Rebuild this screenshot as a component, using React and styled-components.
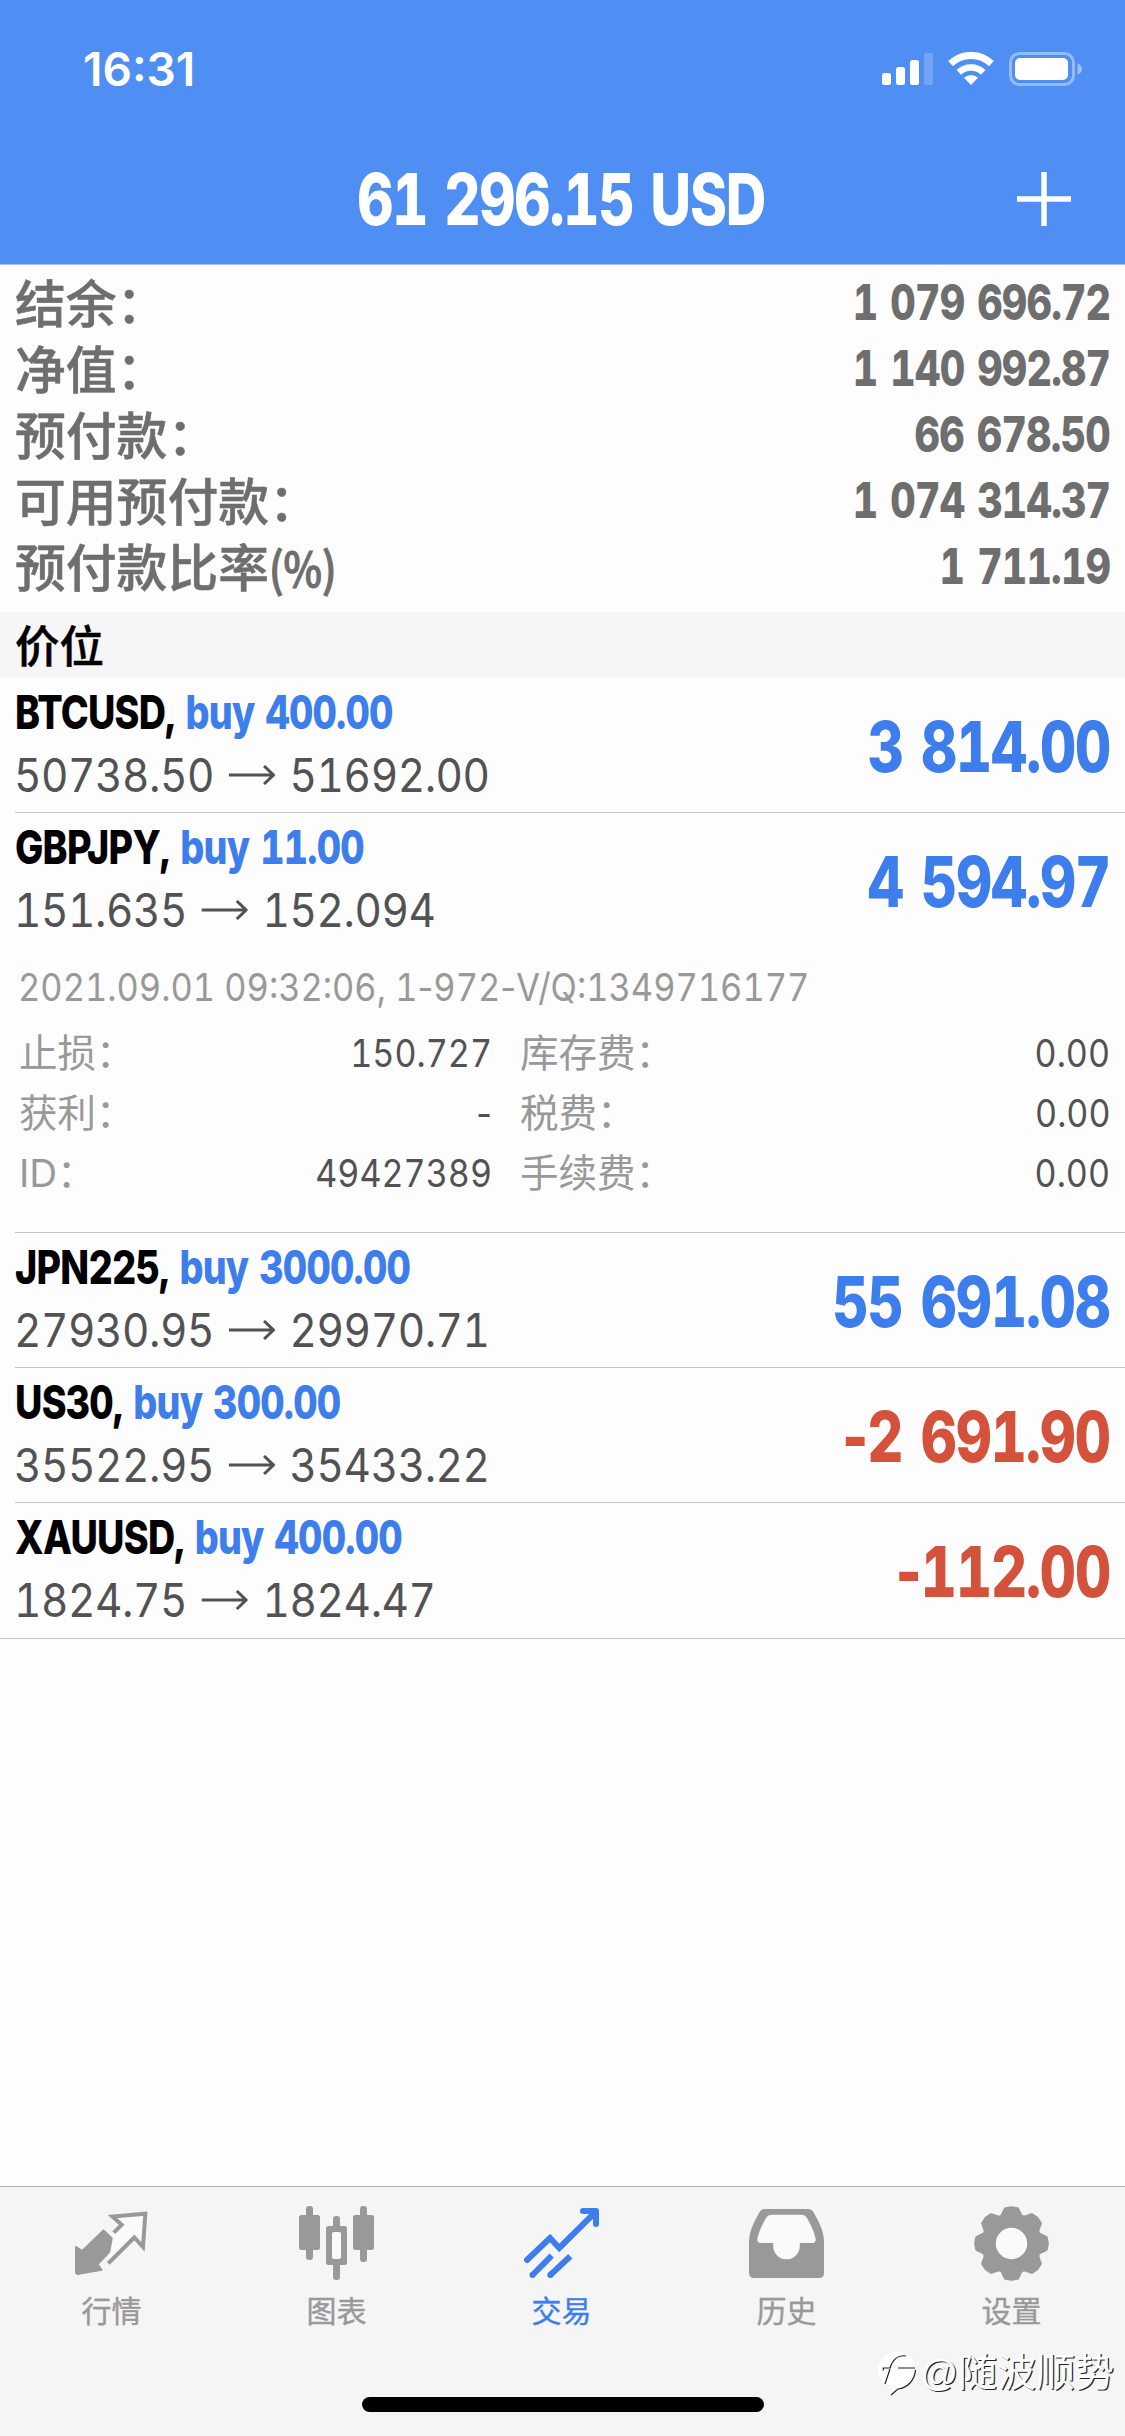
import React from 'react';
import styled, { createGlobalStyle, css } from 'styled-components';

const color = {
  header: '#4f8ff4',
  blue: '#3e7eec',
  red: '#d4513c',
  gray: '#6e6e6e',
  price: '#525254',
  label: '#999999',
  line: '#c4c4c6',
};

const latin = `Inter, "Noto Sans CJK SC", sans-serif`;

const summary = [
  { label: '结余：', value: '1 079 696.72' },
  { label: '净值：', value: '1 140 992.87' },
  { label: '预付款：', value: '66 678.50' },
  { label: '可用预付款：', value: '1 074 314.37' },
  { label: '预付款比率', unit: '(%)', value: '1 711.19' },
];

const positions = [
  { symbol: 'BTCUSD', side: 'buy 400.00', open: '50738.50', now: '51692.00', profit: '3 814.00' },
  {
    symbol: 'GBPJPY',
    side: 'buy 11.00',
    open: '151.635',
    now: '152.094',
    profit: '4 594.97',
    detail: {
      comment: '2021.09.01 09:32:06, 1-972-V/Q:1349716177',
      rows: [
        ['止损：', '150.727', '库存费：', '0.00'],
        ['获利：', '-', '税费：', '0.00'],
        ['ID：', '49427389', '手续费：', '0.00'],
      ],
    },
  },
  { symbol: 'JPN225', side: 'buy 3000.00', open: '27930.95', now: '29970.71', profit: '55 691.08' },
  { symbol: 'US30', side: 'buy 300.00', open: '35522.95', now: '35433.22', profit: '-2 691.90' },
  { symbol: 'XAUUSD', side: 'buy 400.00', open: '1824.75', now: '1824.47', profit: '-112.00' },
];

function SignalIcon() {
  return (
    <svg width="51" height="34" viewBox="0 0 51 34" fill="#fff">
      <rect x="0" y="21" width="9" height="12" rx="2.5" />
      <rect x="14" y="15" width="9" height="18" rx="2.5" />
      <rect x="28" y="8" width="9" height="25" rx="2.5" />
      <rect x="42" y="1" width="9" height="32" rx="2.5" opacity="0.2" />
    </svg>
  );
}

function WifiIcon() {
  return (
    <svg width="46" height="34" viewBox="0 0 46 34" fill="none" stroke="#fff">
      <path d="M2.6 11.6A29.5 29.5 0 0 1 43.4 11.6" strokeWidth="7" />
      <path d="M10.8 20.4A17.7 17.7 0 0 1 35.2 20.4" strokeWidth="6.6" />
      <path d="M23 33L16 25.8A10 10 0 0 1 30 25.8Z" fill="#fff" stroke="none" />
    </svg>
  );
}

function BatteryIcon() {
  return (
    <svg width="74" height="34" viewBox="0 0 74 34">
      <rect x="1.5" y="1.5" width="63" height="31" rx="9" fill="none" stroke="#fff" strokeOpacity="0.4" strokeWidth="3" />
      <rect x="6" y="6" width="53" height="22" rx="5" fill="#fff" />
      <path d="M68.500 11.500C71.500 12.500 73 14.500 73 17S71.500 21.500 68.500 22.500Z" fill="#fff" opacity="0.45" />
    </svg>
  );
}

function QuotesIcon() {
  return (
    <svg width="75" height="75" viewBox="0 0 75 75">
      <path
        d="M2 41L8.300 45L29.500 24.500L43.200 37.500L23.500 58.300L27.500 63.800L3.500 68L2 66.500Z"
        fill="currentColor" stroke="currentColor" strokeWidth="2" strokeLinejoin="round"
      />
      <path
        d="M39.700 26.700L47.700 18.800L38.500 10.500L71.300 7.800L69 41L60.300 31.500L34.300 57.300"
        fill="#fafafa" stroke="none"
      />
      <path
        d="M39.700 26.700L47.700 18.800L38.500 10.500L71.300 7.800L69 41L60.300 31.500L34.300 57.300"
        fill="none" stroke="currentColor" strokeWidth="4"
      />
    </svg>
  );
}

function ChartIcon() {
  return (
    <svg width="75" height="75" viewBox="0 0 75 75" fill="currentColor">
      <rect x="7" y="0" width="7" height="54" rx="3" />
      <rect x="0" y="9" width="21" height="35" rx="2.500" />
      <rect x="34" y="10" width="7" height="64" rx="3" />
      <rect x="27" y="20" width="21" height="39" rx="2.500" />
      <rect x="33" y="26" width="9" height="27" rx="2" fill="#fafafa" />
      <rect x="61" y="0" width="7" height="56" rx="3" />
      <rect x="54" y="9" width="21" height="35" rx="2.500" />
    </svg>
  );
}

function TradeIcon() {
  return (
    <svg width="75" height="75" viewBox="0 0 75 75" fill="none" stroke="currentColor" strokeWidth="6">
      <path d="M3 54L26 32L35.300 42L71 6.500" strokeLinecap="round" />
      <path d="M59 5H72V18" strokeLinecap="round" strokeLinejoin="round" />
      <path d="M27.700 49.700L8.500 69M46.300 50.300L26.300 69" />
      <g fill="currentColor" stroke="none">
        <circle cx="8.500" cy="69" r="3" />
        <circle cx="26.300" cy="69" r="3" />
      </g>
    </svg>
  );
}

function HistoryIcon() {
  return (
    <svg width="75" height="75" viewBox="0 0 75 75" fill="currentColor">
      <path
        fill="#fafafa"
        d="M20 7H55L68 36H51V40A13 13 0 0 1 24 40V36H7Z"
      />
      <path
        fillRule="evenodd"
        d="M16 3H59Q63 3 65 7Q75 24 75 35V67Q75 72 70 72H5Q0 72 0 67V35Q0 24 10 7Q12 3 16 3Z
        M23 8.700Q19 8.700 17 12Q10 24 8.300 33Q8 37 11.500 37H24.200V40A13.200 13.200 0 0 0 50.800 40V37H63.500Q67 37 66.700 33Q65 24 58 12Q56 8.700 52 8.700Z"
      />
    </svg>
  );
}

function gearPath() {
  const points = [];
  const at = (r, deg) => {
    const a = (deg * Math.PI) / 180;
    points.push(`${(37.5 + r * Math.sin(a)).toFixed(2)} ${(37.5 - r * Math.cos(a)).toFixed(2)}`);
  };
  for (let i = 0; i < 8; i++) {
    at(28.6, i * 45 - 19);
    at(34.8, i * 45 - 9.5);
    at(35.4, i * 45);
    at(34.8, i * 45 + 9.5);
    at(28.6, i * 45 + 19);
  }
  return `M${points.join('L')}Z`;
}

function SettingsIcon() {
  return (
    <svg width="75" height="75" viewBox="0 0 75 75">
      <path d={gearPath()} fill="currentColor" stroke="currentColor" strokeWidth="4" strokeLinejoin="round" />
      <circle cx="37.500" cy="37.500" r="15.700" fill="#fafafa" />
    </svg>
  );
}

function ArrowIcon() {
  return (
    <svg width="51" height="20" viewBox="0 0 46 20" preserveAspectRatio="none" fill="none" stroke="currentColor" strokeWidth="3">
      <path d="M0 10H44M35 1L44.300 10L35 19" />
    </svg>
  );
}

function WatermarkLogo() {
  return (
    <svg width="38" height="44" viewBox="0 0 38 44">
      <path d="M19 0C8 0 0 8 0 18C0 26 5 31 14 34L12 43C28 38 38 29 38 17C38 7 30 0 19 0Z" fill="#fff" />
      <path
        d="M5.300 18.500V16H12C14.500 8 20 2.500 28 4M20 16H37M12 17L7 32M37.500 18C36.500 29 29 36 20 37L13 43"
        fill="none" stroke="#222" strokeWidth="1.200"
      />
    </svg>
  );
}

// tabular figures everywhere, but the hyphen keeps its own narrow width
const Digits = ({ children }) =>
  children.split(/(-)/).map((part, i) => (part === '-' ? <Hyphen key={i}>-</Hyphen> : part));

const tabs = [
  { name: '行情', Icon: QuotesIcon },
  { name: '图表', Icon: ChartIcon },
  { name: '交易', Icon: TradeIcon, active: true },
  { name: '历史', Icon: HistoryIcon },
  { name: '设置', Icon: SettingsIcon },
];

const App = () => (
  <Root>
    <GlobalStyle />
    <Header>
      <StatusBar>
        <Clock>16:31</Clock>
        <Indicators>
          <SignalIcon />
          <WifiIcon />
          <BatteryIcon />
        </Indicators>
      </StatusBar>
      <TitleBar>
        <Title>61 296.15 USD</Title>
        <AddButton aria-label="add">
          <svg width="56" height="56" viewBox="0 0 56 56" stroke="#fff" strokeWidth="5.500">
            <path d="M28 1V55M1 28H55" />
          </svg>
        </AddButton>
      </TitleBar>
    </Header>

    <Summary>
      {summary.map(({ label, unit, value }) => (
        <SummaryRow key={label}>
          <SummaryLabel>{label}{unit && <Unit>{unit}</Unit>}</SummaryLabel>
          <SummaryValue>{value}</SummaryValue>
        </SummaryRow>
      ))}
    </Summary>

    <SectionTitle>价位</SectionTitle>

    <List>
      {positions.map(({ symbol, side, open, now, profit, detail }) => (
        <Position key={symbol}>
          <PositionMain>
            <div>
              <Name>{symbol}, <Side>{side}</Side></Name>
              <Prices>
                <span>{open}</span>
                <ArrowIcon />
                <span>{now}</span>
              </Prices>
            </div>
            <Profit $loss={profit.startsWith('-')}><Digits>{profit}</Digits></Profit>
          </PositionMain>
          {detail && (
            <Detail>
              <Comment><Digits>{detail.comment}</Digits></Comment>
              {detail.rows.map(([left, leftValue, right, rightValue]) => (
                <DetailRow key={left}>
                  <DetailLabel>{left}</DetailLabel>
                  <DetailValue><Digits>{leftValue}</Digits></DetailValue>
                  <DetailLabel>{right}</DetailLabel>
                  <DetailValue>{rightValue}</DetailValue>
                </DetailRow>
              ))}
            </Detail>
          )}
        </Position>
      ))}
    </List>

    <TabBar>
      {tabs.map(({ name, Icon, active }) => (
        <Tab key={name} $active={active}>
          <Icon />
          <TabName>{name}</TabName>
        </Tab>
      ))}
    </TabBar>
    <HomeIndicator />
    <Watermark>
      <WatermarkLogo />
      <span><At>@</At>随波顺势</span>
    </Watermark>
  </Root>
);

const GlobalStyle = createGlobalStyle`
  * {
    box-sizing: border-box;
  }
  body {
    margin: 0;
    background: #fdfdfd;
  }
  svg {
    display: block;
    flex: none;
  }
`

const condensed = css`
  display: inline-block;
  font-family: ${latin};
  font-weight: 800;
  font-feature-settings: "tnum";
  white-space: pre;
  letter-spacing: -.02em;
  word-spacing: .08em;
`

const Root = styled.div`
  position: relative;
  display: flex;
  flex-direction: column;
  width: 1125px;
  height: 2436px;
  overflow: hidden;
  background: #fdfdfd;
  font-family: ${latin};
`

const Header = styled.header`
  height: 265px;
  color: #fff;
  background: ${color.header};
  border-bottom: 1px solid #a9bfe4;
`

const StatusBar = styled.div`
  display: flex;
  justify-content: space-between;
  align-items: center;
  height: 138px;
  padding: 0 42px 0 83px;
`

const Clock = styled.span`
  font-size: 46px;
  font-weight: 600;
  line-height: 60px;
`

const Indicators = styled.div`
  display: flex;
  gap: 15px;
`

const TitleBar = styled.div`
  display: grid;
  grid-template-columns: 107px 1fr 109px;
  align-items: center;
  height: 122px;
`

const Title = styled.h1`
  ${condensed}
  grid-column: 2;
  justify-self: center;
  margin: 0;
  font-size: 71px;
  line-height: 80px;
  word-spacing: .05em;
  transform: scaleX(.79);
`

const AddButton = styled.button`
  padding: 0;
  border: 0;
  background: none;
`

const Summary = styled.section`
  padding: 5px 15px 12px;
  color: ${color.gray};
`

const SummaryRow = styled.div`
  display: flex;
  justify-content: space-between;
  height: 66px;
  line-height: 66px;
`

const SummaryLabel = styled.span`
  font-size: 50.800px;
  font-weight: 500;
  line-height: 69px;
  -webkit-text-stroke: .5px;
`

const Unit = styled.span`
  display: inline-block;
  font-family: "Noto Sans CJK SC", sans-serif;
  font-size: 47px;
  line-height: 60px;
  transform: scaleX(.87);
  transform-origin: left;
  -webkit-text-stroke: 1.200px;
`

const SummaryValue = styled.span`
  ${condensed}
  font-size: 49px;
  transform: scaleX(.804);
  transform-origin: right;
`

const SectionTitle = styled.h2`
  margin: 0;
  padding-left: 15px;
  height: 66px;
  font-size: 44.500px;
  font-weight: 500;
  line-height: 70px;
  color: #000;
  background: #f6f6f6;
  -webkit-text-stroke: .5px;
`

const List = styled.ul`
  margin: 0;
  padding: 0;
  list-style: none;
`

const Position = styled.li`
  margin-left: 15px;
  border-bottom: 1px solid ${color.line};
  &:last-child {
    margin-left: 0;
    padding: 0 0 1px 15px;
  }
`

const PositionMain = styled.div`
  display: flex;
  justify-content: space-between;
  height: 134px;
  padding: 3px 15px 0 0;
`

const Name = styled.div`
  ${condensed}
  display: block;
  height: 62px;
  font-size: 47px;
  line-height: 62px;
  word-spacing: .04em;
  color: #000;
  transform: scaleX(.802);
  transform-origin: left;
`

const Side = styled.span`
  color: ${color.blue};
`

const Prices = styled.div`
  display: flex;
  align-items: center;
  gap: 16px;
  height: 64px;
  margin-left: -1px;
  font-size: 46.500px;
  line-height: 64px;
  letter-spacing: -.01em;
  font-feature-settings: "tnum";
  color: ${color.price};
  transform: scaleX(.91);
  transform-origin: left;
`

const Profit = styled.span`
  ${condensed}
  font-size: 70px;
  line-height: 132px;
  color: ${({ $loss }) => ($loss ? color.red : color.blue)};
  transform: scaleX(.8);
  transform-origin: right;
`

const Hyphen = styled.span`
  font-feature-settings: normal;
`

const Detail = styled.div`
  padding: 10px 15px 29px 4px;
  color: ${color.price};
  font-size: 38.500px;
  font-feature-settings: "tnum";
`

const Comment = styled.div`
  margin: 0 0 6px -1px;
  line-height: 60px;
  white-space: nowrap;
  color: ${color.label};
  transform: scaleX(.894);
  transform-origin: left;
`

const DetailRow = styled.div`
  display: grid;
  grid-template-columns: 236px 237px 28px auto 1fr;
  height: 60px;
  line-height: 60px;
  & > :nth-child(3) {
    grid-column: 4;
  }
`

const DetailLabel = styled.span`
  color: ${color.label};
`

const DetailValue = styled.span`
  text-align: right;
  transform: scaleX(.885);
  transform-origin: right;
`

const TabBar = styled.nav`
  display: grid;
  grid-template-columns: repeat(5, 225px);
  height: 250px;
  margin-top: auto;
  padding-top: 19px;
  background: #f5f5f5;
  border-top: 1px solid #b2b2b2;
`

const Tab = styled.div`
  display: flex;
  flex-direction: column;
  align-items: center;
  padding-right: 2px;
  color: ${({ $active }) => ($active ? color.blue : '#999')};
`

const TabName = styled.span`
  margin-top: 8px;
  font-size: 30px;
  line-height: 44px;
  -webkit-text-stroke: .4px;
`

const HomeIndicator = styled.div`
  position: absolute;
  left: 362px;
  bottom: 24px;
  width: 402px;
  height: 15px;
  border-radius: 8px;
  background: #000;
`

const Watermark = styled.div`
  position: absolute;
  right: 11px;
  bottom: 38px;
  display: flex;
  align-items: center;
  gap: 4px;
  font-family: "Noto Sans CJK SC", sans-serif;
  font-size: 39px;
  line-height: 48px;
  color: #fff;
  text-shadow: 1.300px 1.300px 0 #222;
  & > span {
    margin-top: -4px;
  }
`

const At = styled.span`
  font-family: "Liberation Sans", sans-serif;
  font-size: 37px;
`

export default App;
